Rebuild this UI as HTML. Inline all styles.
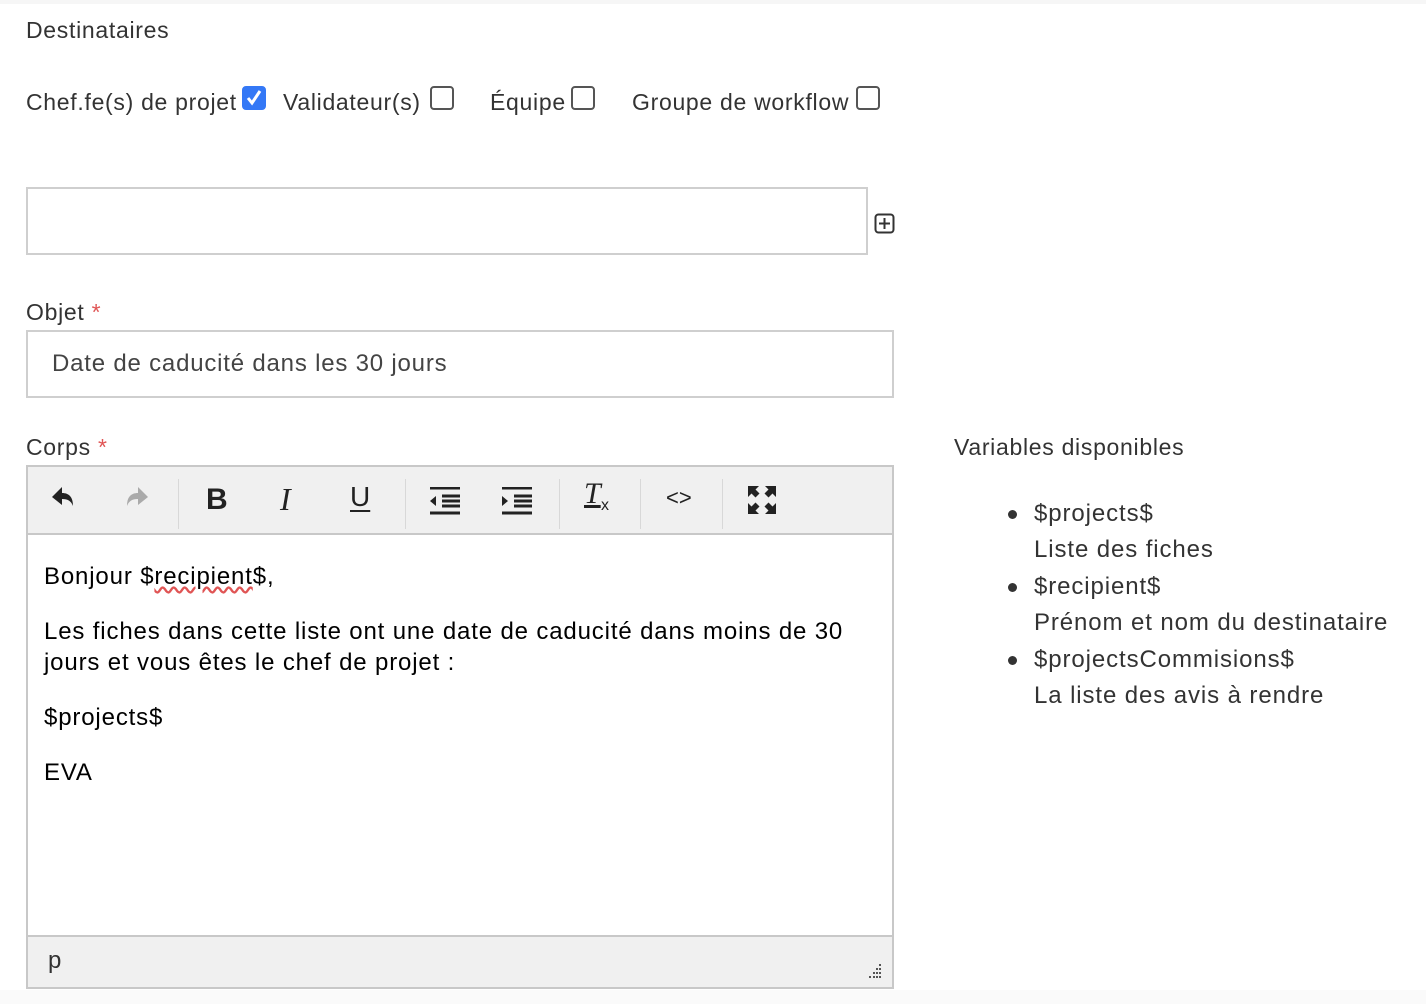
<!DOCTYPE html>
<html><head><meta charset="utf-8"><style>
*{margin:0;padding:0;box-sizing:border-box}
body{width:1426px;height:1004px;background:#fff;font-family:"Liberation Sans",Arial,sans-serif;color:#333;position:relative;overflow:hidden}
.a{position:absolute;white-space:nowrap}
.lbl{font-size:23px;color:#333;letter-spacing:0.7px}
.cb{position:absolute;width:24px;height:24px;border:2px solid #555;border-radius:4px;background:#fff}
.cb.on{background:#3478f6;border-color:#3478f6}
.req{color:#e05555}
.ed{position:absolute;left:26px;top:465px;width:868px;height:524px;border:2px solid #c8c8c8;background:#fff}
.tb{position:absolute;left:0;top:0;width:864px;height:68px;background:#f0f0f0;border-bottom:2px solid #c8c8c8}
.sep{position:absolute;top:12px;width:1px;height:50px;background:#d8d8d8}
.sb{position:absolute;left:0;bottom:0;width:864px;height:52px;background:#f0f0f0;border-top:2px solid #c8c8c8}
.et{font-family:"Liberation Sans",Helvetica,sans-serif;font-size:24px;color:#000;letter-spacing:0.85px}
.v{font-size:24px;color:#333;letter-spacing:0.9px}
.bul{position:absolute;left:1008px;width:9px;height:9px;border-radius:50%;background:#333}
</style></head><body>
<div style="position:absolute;left:0;top:0;width:1426px;height:4px;background:#f6f6f6"></div>
<div class="a lbl" style="left:26px;top:17px">Destinataires</div>

<div class="a lbl" style="left:26px;top:89px">Chef.fe(s) de projet</div>
<div class="cb on" style="left:242px;top:86px"><svg width="20" height="20" viewBox="0 0 20 20" style="position:absolute;left:0;top:0"><path d="M4 10l4 5 8-12" stroke="#fff" stroke-width="3" fill="none"/></svg></div>
<div class="a lbl" style="left:283px;top:89px">Validateur(s)</div>
<div class="cb" style="left:430px;top:86px"></div>
<div class="a lbl" style="left:490px;top:89px">Équipe</div>
<div class="cb" style="left:571px;top:86px"></div>
<div class="a lbl" style="left:632px;top:89px">Groupe de workflow</div>
<div class="cb" style="left:856px;top:86px"></div>

<div style="position:absolute;left:26px;top:187px;width:842px;height:68px;border:2px solid #cfcfcf"></div>
<svg class="a" style="left:874px;top:213px" width="21" height="21" viewBox="0 0 21 21"><rect x="1.5" y="1.5" width="18" height="18" rx="3" fill="none" stroke="#333" stroke-width="2"/><path d="M10.5 5v11M5 10.5h11" stroke="#333" stroke-width="2"/></svg>

<div class="a lbl" style="left:26px;top:299px">Objet <span class="req">*</span></div>
<div style="position:absolute;left:26px;top:330px;width:868px;height:68px;border:2px solid #cfcfcf"></div>
<div class="a" style="left:52px;top:350px;font-size:24px;color:#444;letter-spacing:0.8px">Date de caducité dans les 30 jours</div>

<div class="a lbl" style="left:26px;top:434px">Corps <span class="req">*</span></div>

<div class="ed">
 <div class="tb">
  <svg class="a" style="left:22px;top:18px" width="26" height="28" viewBox="0 0 26 28"><path d="M2 12L12 2v6c7 0 11 4 11 13-2-5-5-7-11-7v6z" fill="#222"/></svg>
  <svg class="a" style="left:96px;top:18px" width="26" height="28" viewBox="0 0 26 28"><path d="M24 12L14 2v6C7 8 3 12 3 21c2-5 5-7 11-7v6z" fill="#aaa"/></svg>
  <div class="sep" style="left:150px"></div>
  <div class="a" style="left:178px;top:16px;font-size:30px;font-weight:bold;color:#222">B</div>
  <div class="a" style="left:252px;top:14px;font-size:32px;font-style:italic;font-family:'Liberation Serif',serif;color:#222">I</div>
  <div class="a" style="left:322px;top:14px;font-size:28px;color:#222;text-decoration:underline;text-underline-offset:4px">U</div>
  <div class="sep" style="left:377px"></div>
  <svg class="a" style="left:402px;top:20px" width="30" height="28" viewBox="0 0 30 28"><path d="M0 1h30M12 9h18M12 14h18M12 19h18M0 26h30" stroke="#222" stroke-width="3"/><path d="M0 14l6-5v10z" fill="#222"/></svg>
  <svg class="a" style="left:474px;top:20px" width="30" height="28" viewBox="0 0 30 28"><path d="M0 1h30M12 9h18M12 14h18M12 19h18M0 26h30" stroke="#222" stroke-width="3"/><path d="M6 14l-6-5v10z" fill="#222"/></svg>
  <div class="sep" style="left:531px"></div>
  <div class="a" style="left:556px;top:10px;font-size:30px;font-style:italic;font-family:'Liberation Serif',serif;color:#222;text-decoration:underline">T</div>
  <div class="a" style="left:573px;top:30px;font-size:16px;color:#222">x</div>
  <div class="sep" style="left:612px"></div>
  <div class="a" style="left:638px;top:18px;font-size:22px;color:#222">&lt;&gt;</div>
  <div class="sep" style="left:694px"></div>
  <svg class="a" style="left:720px;top:19px" width="28" height="28" viewBox="0 0 28 28"><path d="M0 0h11l-3.5 3.5 4 4-4 4-4-4L0 11zM28 0v11l-3.5-3.5-4 4-4-4 4-4L17 0zM0 28V17l3.5 3.5 4-4 4 4-4 4L11 28zM28 28H17l3.5-3.5-4-4 4-4 4 4L28 17z" fill="#222"/></svg>
 </div>
 <div class="a et" style="left:16px;top:96px">Bonjour $<span style="text-decoration:underline wavy #e05555">recipient</span>$,</div>
 <div class="a et" style="left:16px;top:151px">Les fiches dans cette liste ont une date de caducité dans moins de 30</div>
 <div class="a et" style="left:16px;top:182px">jours et vous êtes le chef de projet :</div>
 <div class="a et" style="left:16px;top:237px">$projects$</div>
 <div class="a et" style="left:16px;top:292px">EVA</div>
 <div class="sb">
  <div class="a" style="left:20px;top:10px;font-size:24px;color:#333">p</div>
  <svg class="a" style="left:838px;top:26px" width="16" height="16" viewBox="0 0 16 16" fill="#555"><rect x="13" y="1" width="2" height="2"/><rect x="10" y="5" width="2" height="2"/><rect x="13" y="5" width="2" height="2"/><rect x="7" y="9" width="2" height="2"/><rect x="10" y="9" width="2" height="2"/><rect x="13" y="9" width="2" height="2"/><rect x="3" y="13" width="2" height="2"/><rect x="7" y="13" width="2" height="2"/><rect x="10" y="13" width="2" height="2"/><rect x="13" y="13" width="2" height="2"/></svg>
 </div>
</div>
<div style="position:absolute;left:0;top:990px;width:1426px;height:14px;background:#fafafa"></div>

<div class="a lbl" style="left:954px;top:434px">Variables disponibles</div>
<div class="bul" style="top:510px"></div>
<div class="a v" style="left:1034px;top:500px">$projects$</div>
<div class="a v" style="left:1034px;top:536px">Liste des fiches</div>
<div class="bul" style="top:583px"></div>
<div class="a v" style="left:1034px;top:573px">$recipient$</div>
<div class="a v" style="left:1034px;top:609px">Prénom et nom du destinataire</div>
<div class="bul" style="top:656px"></div>
<div class="a v" style="left:1034px;top:646px">$projectsCommisions$</div>
<div class="a v" style="left:1034px;top:682px">La liste des avis à rendre</div>
</body></html>
